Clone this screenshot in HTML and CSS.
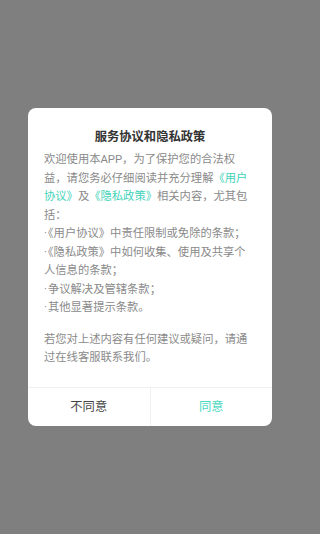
FILE: index.html
```html
<!DOCTYPE html>
<html lang="zh-CN">
<head>
<meta charset="utf-8">
<title>服务协议和隐私政策</title>
<link rel="stylesheet" href="styles.css">
</head>
<body>
<div class="overlay">
  <div class="dialog">
    <div class="content">
      <h1 class="title">服务协议和隐私政策</h1>
      <p class="para">欢迎使用本APP，为了保护您的合法权<br>益，请您务必仔细阅读并充分理解<span class="link">《用户<br>协议》</span>及<span class="link">《隐私政策》</span>相关内容，尤其包<br>括：<br><span class="dot">·</span>《用户协议》中责任限制或免除的条款；<br><span class="dot">·</span>《隐私政策》中如何收集、使用及共享个<br>人信息的条款；<br><span class="dot">·</span>争议解决及管辖条款；<br><span class="dot">·</span>其他显著提示条款。</p>
      <p class="para para-last">若您对上述内容有任何建议或疑问，请通<br>过在线客服联系我们。</p>
    </div>
    <div class="actions">
      <button class="btn btn-cancel">不同意</button>
      <button class="btn btn-ok">同意</button>
    </div>
  </div>
</div>
</body>
</html>
```

FILE: styles.css
```css
* { box-sizing: border-box; }
html, body {
  margin: 0;
  padding: 0;
  height: 100%;
}
body {
  background: #7f7f7f;
  font-family: Roboto, "Noto Sans CJK SC", sans-serif;
}
.overlay {
  width: 300px;
  height: 534px;
  display: flex;
  align-items: center;
  justify-content: center;
}
.dialog {
  width: 244px;
  height: 318px;
  background: #ffffff;
  border-radius: 8px;
  overflow: hidden;
  display: flex;
  flex-direction: column;
}
.content {
  flex: 1;
  padding: 20px 16px 0 16px;
}
.title {
  margin: 0;
  font-size: 12.3px;
  line-height: 19px;
  font-weight: bold;
  color: #333333;
  text-align: center;
}
.para {
  margin: 4px 0 0 0;
  font-size: 11.3px;
  line-height: 18.5px;
  color: #8a8a8a;
  white-space: nowrap;
}
.para-last {
  margin-top: 13px;
}
.link {
  color: #3fd3b9;
}
.dot {
  margin-right: 1px;
}
.actions {
  display: flex;
  height: 39px;
  border-top: 1px solid #f0f0f0;
}
.btn {
  flex: 1;
  border: 0;
  background: transparent;
  margin: 0;
  padding: 0;
  font-family: Roboto, "Noto Sans CJK SC", sans-serif;
  font-size: 12.3px;
  line-height: 38px;
  height: 38px;
}
.btn-cancel {
  color: #444444;
  border-right: 1px solid #f0f0f0;
}
.btn-ok {
  color: #4dd8c1;
}
```
